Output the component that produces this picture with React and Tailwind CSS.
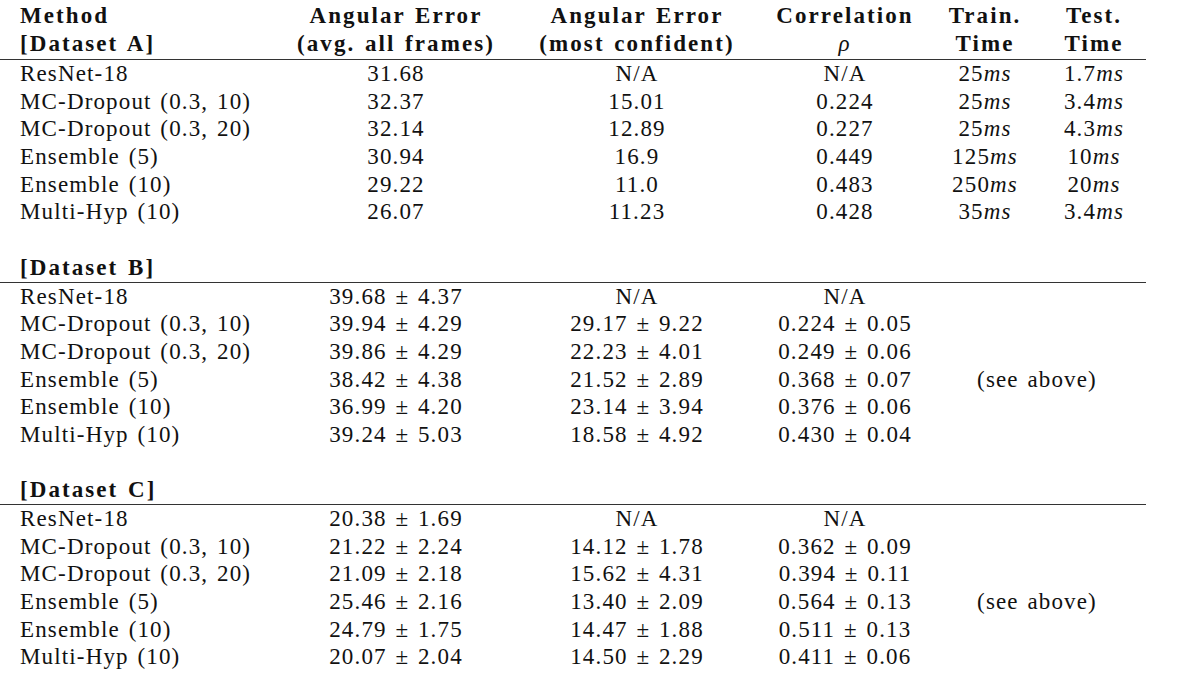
import React from "react";

const cols = "grid grid-cols-[290px_212px_270px_146px_134px_94px]";

const sectionA = [
  ["ResNet-18", "31.68", "N/A", "N/A", "25", "1.7"],
  ["MC-Dropout (0.3, 10)", "32.37", "15.01", "0.224", "25", "3.4"],
  ["MC-Dropout (0.3, 20)", "32.14", "12.89", "0.227", "25", "4.3"],
  ["Ensemble (5)", "30.94", "16.9", "0.449", "125", "10"],
  ["Ensemble (10)", "29.22", "11.0", "0.483", "250", "20"],
  ["Multi-Hyp (10)", "26.07", "11.23", "0.428", "35", "3.4"],
];

const sectionB = [
  ["ResNet-18", "39.68 ± 4.37", "N/A", "N/A"],
  ["MC-Dropout (0.3, 10)", "39.94 ± 4.29", "29.17 ± 9.22", "0.224 ± 0.05"],
  ["MC-Dropout (0.3, 20)", "39.86 ± 4.29", "22.23 ± 4.01", "0.249 ± 0.06"],
  ["Ensemble (5)", "38.42 ± 4.38", "21.52 ± 2.89", "0.368 ± 0.07"],
  ["Ensemble (10)", "36.99 ± 4.20", "23.14 ± 3.94", "0.376 ± 0.06"],
  ["Multi-Hyp (10)", "39.24 ± 5.03", "18.58 ± 4.92", "0.430 ± 0.04"],
];

const sectionC = [
  ["ResNet-18", "20.38 ± 1.69", "N/A", "N/A"],
  ["MC-Dropout (0.3, 10)", "21.22 ± 2.24", "14.12 ± 1.78", "0.362 ± 0.09"],
  ["MC-Dropout (0.3, 20)", "21.09 ± 2.18", "15.62 ± 4.31", "0.394 ± 0.11"],
  ["Ensemble (5)", "25.46 ± 2.16", "13.40 ± 2.09", "0.564 ± 0.13"],
  ["Ensemble (10)", "24.79 ± 1.75", "14.47 ± 1.88", "0.511 ± 0.13"],
  ["Multi-Hyp (10)", "20.07 ± 2.04", "14.50 ± 2.29", "0.411 ± 0.06"],
];

const Ms = ({ v }) => (
  <span>
    {v}
    <i>ms</i>
  </span>
);

const Rule = () => <div className="h-px bg-[#333]" />;

const Blank = () => <div className="h-[27.7px]" />;

const SectionRows = ({ rows }) =>
  rows.map((r, i) => (
    <div key={i} className={`${cols} h-[27.7px] leading-[27.7px]`}>
      <div className="pl-[20px] whitespace-nowrap">{r[0]}</div>
      <div className="text-center whitespace-nowrap">{r[1]}</div>
      <div className="text-center whitespace-nowrap">{r[2]}</div>
      <div className="text-center whitespace-nowrap">{r[3]}</div>
      {i === 3 ? (
        <div className="col-span-2 pl-[20px] pr-[10px] text-center whitespace-nowrap">
          (see above)
        </div>
      ) : (
        <div className="col-span-2" />
      )}
    </div>
  ));

const App = () => {
  return (
    <div className="w-[1178px] h-[681px] bg-white text-[#111] overflow-hidden font-['Liberation_Serif','Times_New_Roman',serif]">
      <div className="w-[1146px] pt-[2px] text-[23px] tracking-[0.05em] [word-spacing:0.08em]">
        {/* Header */}
        <div className={`${cols} h-[28px] leading-[28px] font-bold tracking-[0.09em]`}>
          <div className="pl-[20px]">Method</div>
          <div className="text-center">Angular Error</div>
          <div className="text-center">Angular Error</div>
          <div className="text-center">Correlation</div>
          <div className="text-center">Train.</div>
          <div className="text-center pr-[10px]">Test.</div>
        </div>
        <div className={`${cols} h-[28px] leading-[28px] font-bold tracking-[0.09em]`}>
          <div className="pl-[20px] whitespace-nowrap">[Dataset A]</div>
          <div className="text-center whitespace-nowrap">(avg. all frames)</div>
          <div className="text-center whitespace-nowrap">(most confident)</div>
          <div className="text-center font-normal italic">ρ</div>
          <div className="text-center">Time</div>
          <div className="text-center pr-[10px]">Time</div>
        </div>
        <div className="mt-[1px]">
          <Rule />
        </div>

        {/* Dataset A */}
        {sectionA.map((r, i) => (
          <div key={i} className={`${cols} h-[27.7px] leading-[27.7px]`}>
            <div className="pl-[20px] whitespace-nowrap">{r[0]}</div>
            <div className="text-center">{r[1]}</div>
            <div className="text-center">{r[2]}</div>
            <div className="text-center">{r[3]}</div>
            <div className="text-center">
              <Ms v={r[4]} />
            </div>
            <div className="text-center pr-[10px]">
              <Ms v={r[5]} />
            </div>
          </div>
        ))}
        <Blank />

        {/* Dataset B */}
        <div className="h-[27.7px] leading-[27.7px] pl-[20px] font-bold tracking-[0.09em]">
          [Dataset B]
        </div>
        <Rule />
        <SectionRows rows={sectionB} />
        <Blank />

        {/* Dataset C */}
        <div className="h-[27.7px] leading-[27.7px] pl-[20px] font-bold tracking-[0.09em]">
          [Dataset C]
        </div>
        <Rule />
        <SectionRows rows={sectionC} />
      </div>
    </div>
  );
};

export default App;
